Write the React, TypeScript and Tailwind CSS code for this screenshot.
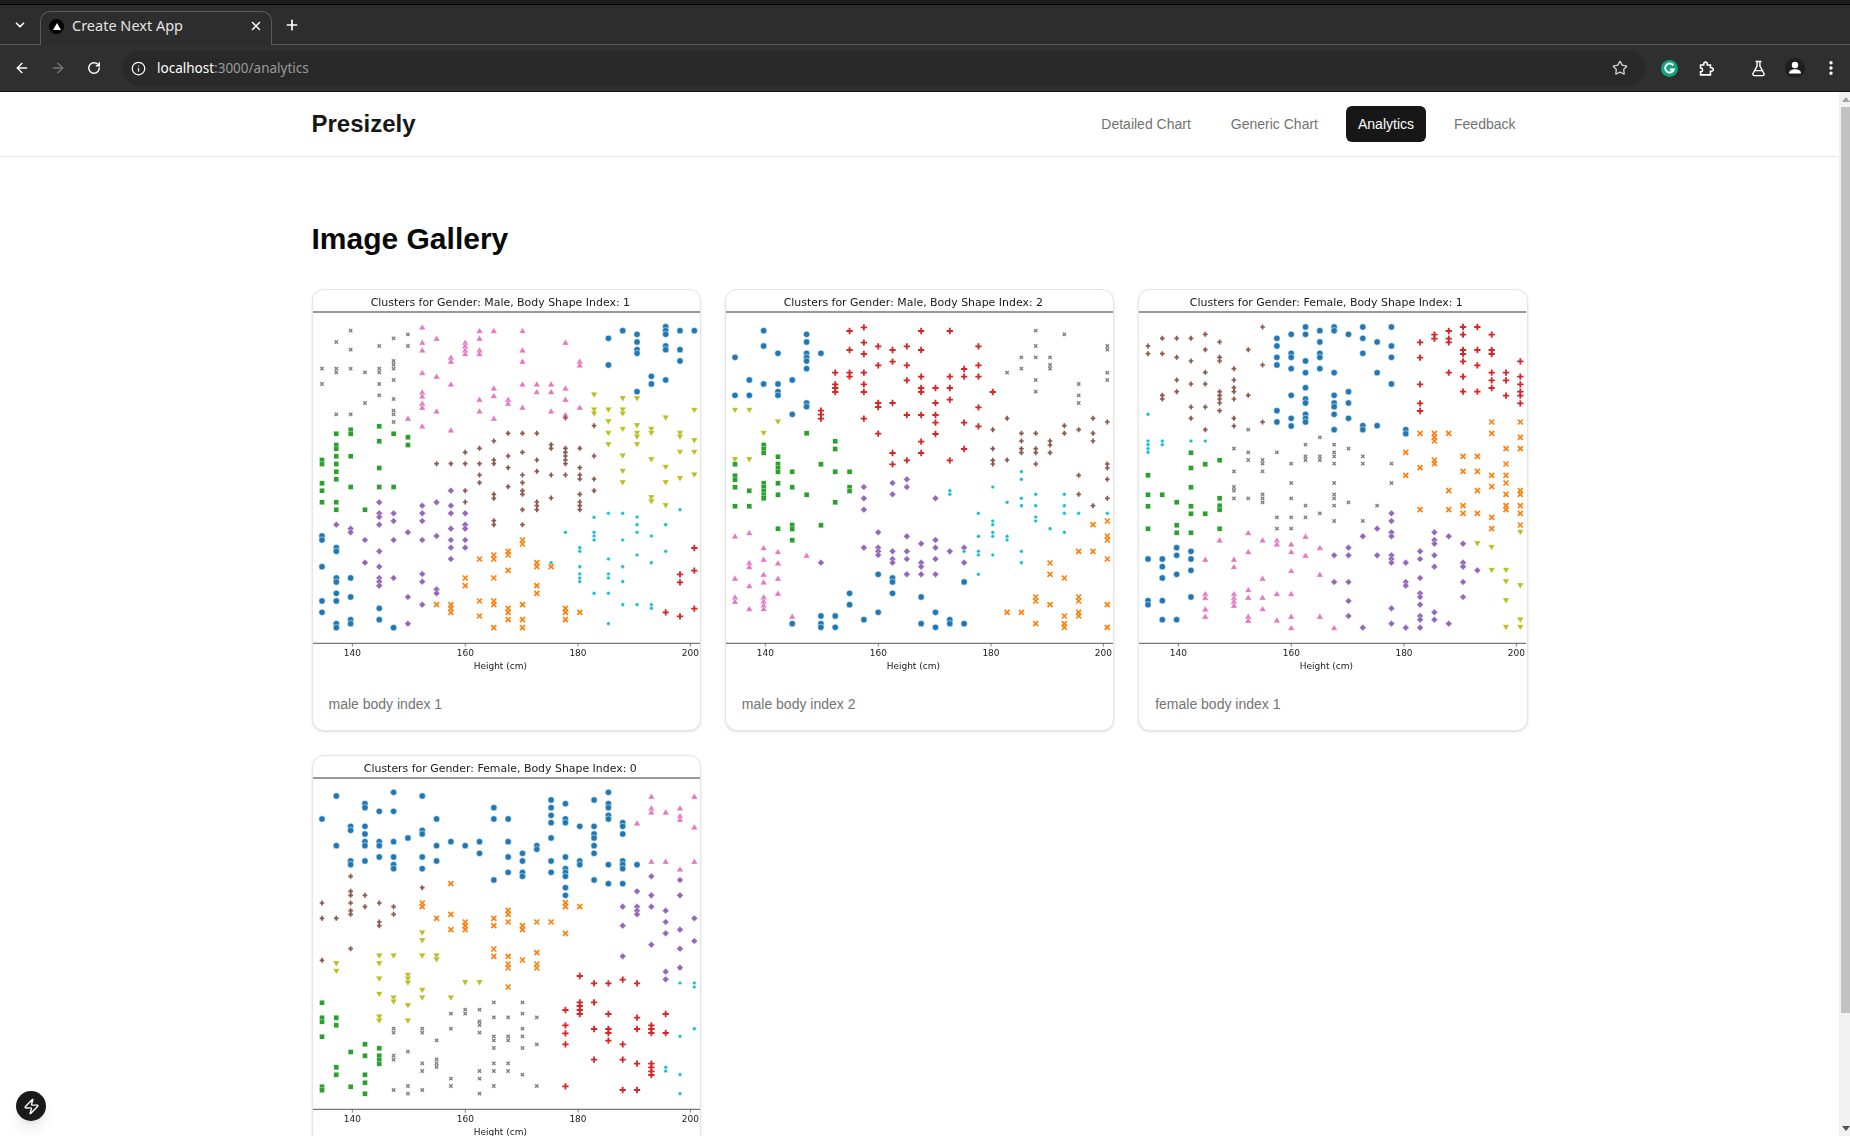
import { ArrowLeft, ArrowRight, ChevronDown, EllipsisVertical, FlaskConical, Info, Plus, RotateCw, Star, X, Zap } from "lucide-react"

type Marker = "circle" | "x" | "square" | "plus" | "diamond" | "thin" | "up" | "smallx" | "down" | "dot"

const markers: Record<string, { marker: Marker; color: string }> = {
  blue: { marker: "circle", color: "#1f77b4" },
  orange: { marker: "x", color: "#ff7f0e" },
  green: { marker: "square", color: "#2ca02c" },
  red: { marker: "plus", color: "#d62728" },
  purple: { marker: "diamond", color: "#9467bd" },
  brown: { marker: "thin", color: "#8c564b" },
  pink: { marker: "up", color: "#e377c2" },
  gray: { marker: "smallx", color: "#7f7f7f" },
  olive: { marker: "down", color: "#bcbd22" },
  cyan: { marker: "dot", color: "#17becf" },
}

// "col:y,y col:y" - col is the height step, y is measured in 3x pixels of the picture
const charts = [
  {
    title: "Clusters for Gender: Male, Body Shape Index: 1",
    caption: "male body index 1",
    top: 28,
    series: {
      gray: "0:264,310 1:184,264,275,401 2:150,207,264,401 3:275,367 4:196,264,275,310,344 5:173,241,252,264,298,355,390,401,424 6:161,196",
      pink: "6:414 7:140,186,209,277,335,347,369,381,437 8:174,288,392 9:231,243,311,449 10:186,197,209,220 11:151,174,209,220,357,392 12:151,323,346,414 13:357,369 14:151,209,243,311,381 15:311,334 16:311,334,392 17:186,323,357,403 18:243,254,381",
      olive: "19:342,387,399 20:387,422,457,491 21:353,387,399,445,525,571,605 22:353,434,457,468,491 23:445,457,536,650,662 24:411,559,605,674 25:457,468,514,593 26:388,479,514,582",
      brown: "8:549 9:549 10:515,549,630,664 11:503,549,583,606 12:481,538,549,641,653,720,732 13:458,526,561,618 14:458,515,583,606,630,641,687,732 15:458,538,572,664,675,687 16:492,503,583,652 17:412,503,515,526,538,549,583 18:503,561,583,595,641,664,675,687 19:435,526,595,630",
      green: "0:538,550,608,630,665 1:459,493,504,527,550,573,596,665,687 2:447,459,527,619 3:687 4:437,482,562,619 5:459,619 6:470,493",
      purple: "1:732 2:744,755 3:778,846 4:665,698,709,732,812,858,892,903,915 5:698,721,778,892 6:755,949,1029 7:675,698,721,778,880,903,972 8:665,766,926,938 9:630,675,698,744,778,801,835 10:698,732,744,778,801",
      cyan: "16:846 17:755 18:801,812,858,880,892,903 19:710,755,766,778,938 20:698,835,880,892,938,1029 21:698,778,858,903,972 22:709,732,755,823,972 23:766,846,972,983 24:732,812 25:687",
      blue: "0:766,778,858,961,995 1:801,812,892,904,938,961,1029,1041 2:892,949,1017,1029 4:983,1017 5:1041 20:173,253 21:150 22:161,184,207,218,333 23:287,310 24:138,150,161,196,207,298 25:150,207,241 26:150",
      orange: "8:972 9:972,983,995 10:892,915 11:835,961,1006 12:823,835,892,961,972,1041 13:812,823,869,983,995,1017 14:778,790,972,1017,1041 15:846,858,915,938 16:858 17:983,995,1017 18:995",
      red: "24:995 25:881,905,1007 26:802,870,984",
    },
  },
  {
    title: "Clusters for Gender: Male, Body Shape Index: 2",
    caption: "male body index 2",
    top: 28,
    series: {
      blue: "0:230,344 1:298,344 2:150,196,310 3:218,310,333,344 4:298,401,1029 5:161,184,218,230,241,264,367,378 6:218,1006,1029,1040 7:1006,1040 8:938,972 9:1017 10:881,995 11:892,904,938 13:949,1029 14:995,1040 15:1017,1029 16:904,1029",
      olive: "0:388,536 1:388,536 2:457 3:423",
      red: "6:390,402,414 7:276,311,322,334 8:151,208,276,288 9:140,186,220,276,311,334,414 10:197,254,367,379,459 11:208,243,367,517,551 12:197,254,299,403,539 13:151,208,288,322,334,403,483,517 14:322,367,403,426,460 15:151,288,322,357,539 16:265,288,426,505 17:197,254,288,380,437 18:334",
      green: "0:551,585,597,620,677 1:630,677 2:493,505,516,608,620,631,642,653 3:528,550,562,573,608,642,744 4:573,620,733,745,779 5:458,642 6:551,734 7:482,505,573,665 8:573,620,631",
      gray: "19:276 20:230,264 21:150,196,230,298,333 22:230,253,264 23:161 24:310,344,367 26:196,207,276,298",
      brown: "18:447,504,539,550 19:413,538 20:458,481,504,516 21:458,504,516,550 22:481,493,516 23:435,458 24:447,584,641 25:413,458,481,675 26:424,550,562,596,653",
      purple: "6:846 9:619,653,687,801 10:755,801,812,823 11:607,641,812,835,846 12:596,619,767,812,835,881 13:789,846,858,881 14:653,778,801,835,881 15:812 16:801,846",
      cyan: "15:630,641 16:812 17:698,767,812,823,881 18:619,721,732,755,767,823 19:665,767,778 20:573,596,653,675,812,846 21:641,675,709,721 22:744 23:641,675,698,755 24:698 26:698",
      pink: "0:767,894,950,963 1:757,847,859,916,985 2:802,837,882,905,950,962,974,985 3:814,848,894,939 4:1008 5:825",
      orange: "19:995 20:995 21:949,961,1029 22:847,881,972 23:892,1006,1029,1040 24:812,949,961,995,1006 25:732,812 26:721,766,778,835,972,1040",
    },
  },
  {
    title: "Clusters for Gender: Female, Body Shape Index: 1",
    caption: "female body index 1",
    top: 28,
    series: {
      brown: "0:196,219 1:173,219,344,355 2:173,230,298,333 3:173,241,310,379,413 4:161,207,275,310,379,447 5:184,230,241,333,344,355,367,390 6:264,298,321,333,355,413,436 7:207,344 8:139,253,424",
      blue: "0:835,960,972 1:835,858,892,960,1017 2:801,824,881,1017 3:812,835,869,949 9:173,196,230,253,390,424 10:161,218,230,264,344,413,436 11:139,161,241,276,321,355,367,401,413,424 12:150,184,218,230,264 13:139,150,276,344,367,378,401,447 14:161,333,367,413 15:139,173,218,435,447 16:184,276,435 17:139,196,230,310 18:447,459",
      red: "19:185,231,311,368,391 20:162,174 21:151,174,185,276 22:139,162,208,220,242,288,333 23:139,208,254,333 24:162,208,220,276,299,322 25:276,299,345 26:242,288,311,333,345,368",
      cyan: "0:401,481,492,504,515 1:481,492 3:481 4:481",
      green: "0:584,642,677,744 1:642 2:665,734,756 3:516,562,620,677,699,756 4:551,699 5:539,653,675,687,744",
      gray: "6:504,572,619,630,653 7:447,515,538,653 8:538,549,572,641,653,665 9:515,710,744 10:549,607,653,710,744 11:492,527,538,675,710 12:470,527,538,698 13:492,515,527,549,607,641,653,675,721 14:504,665 15:527,549,721 16:675 17:549,607",
      orange: "18:515,584 19:458,561,687 20:458,470,481,538,549 21:458,630,687 22:527,572,675,698 23:527,572,630,698 24:424,458,584,618,710,744 25:504,550,584,607,641,675,687 26:424,470,504,630,641,675,698,733",
      pink: "4:837,940,952,986,1008 5:779 6:837,859,940,952,963,975 7:757,814,928,951,1008,1020 8:779,894,951,985 9:779,791,940,1019 10:791,814,871,940,1008,1042 11:768,825 12:802,882,1008 13:1042",
      purple: "13:824,904 14:801,824,904,961,1006 15:767,1041 16:744,824 17:698,721,755,767,824,835,846,983,1029 18:846,904,915,1041 19:812,835,892,938,949,972,1006,1017,1041 20:755,778,789,824,858,995,1017 21:767,1029 22:789,846,858,904,949 23:869",
      olive: "23:788 24:799,868 25:868,902,959,1039 26:754,914,1017,1039",
    },
  },
  {
    title: "Clusters for Gender: Female, Body Shape Index: 0",
    caption: "",
    top: 27,
    series: {
      blue: "0:216 1:147,296 2:238,250,342,353 3:170,182,238,261,284,296,342 4:193,284,296,330 5:136,193,284,330,353,365 6:273 7:147,250,261,330,365 8:216,296,342 9:284 10:296 11:284,319 12:182,216,399 13:216,284,330,376 14:319,342,376,388 15:296,307 16:159,182,205,227,273,342,376 17:170,216,227,330,365,376,388,422,445 18:238,342,353 19:159,238,261,273,296,319,399 20:136,170,182,205,216,353,410 21:227,238,261,342,353,365,410 22:353",
      pink: "22:229 23:149,184,196,344 24:196,344 25:184,207,218,367 26:149,241,344",
      brown: "0:468,514,640 1:514 2:388,433,445,468,491,502,605 3:445,479 4:468,525,536 5:479,502 7:422",
      orange: "7:468,479 8:514 9:410,502,548 10:525,536,548 12:514,536,606,628 13:490,502,525,628,651,663,720 14:536,548,639 15:525,617,651,663 16:525 17:467,479,559 18:479",
      purple: "21:479,536,628 22:433,479,491,502 23:388,445,479,593 24:491,525,559,674,697 25:399,445,548,605,662 26:514,582",
      olive: "1:649,672 4:626,649,695,741,809,821 5:626,752,764 6:684,695,707,775,821 7:557,580,626,729,752 8:626,637 9:752 10:706 11:706",
      green: "0:767,812,824,869,1019,1030 1:812,835,961,983 2:915,1019 3:892,926,983,1007,1040 4:904,926,938,950",
      gray: "5:845,857,926,938,1029 6:914,1017,1040 7:845,857,949,972,1029 8:880,937,949,960 9:800,845,995,1017 10:788,800 11:788,823,834,857,972,995,1040 12:766,811,868,880,903,949,972,1017 13:811,868,880,949,972 14:766,800,845,868,903,983 15:811,892,1017",
      red: "17:789,835,859,892,1018 18:687,766,777,789,801 19:709,766,846,938 20:709,801,846,858,881 21:698,892,938,1029 22:709,812,846,950,1029 23:835,846,858,950,961,973,984 24:801,858",
      cyan: "24:961,972 25:708,868,983,1040 26:708,720,845",
    },
  },
]

const ticks = [
  { label: "140", x: 118 },
  { label: "160", x: 457 },
  { label: "180", x: 795 },
  { label: "200", x: 1132 },
]

function Point({ marker, color, x, y }: { marker: Marker; color: string; x: number; y: number }) {
  const t = `translate(${x} ${y})`
  if (marker === "circle") return <circle cx={x} cy={y} r={9.5} fill={color} stroke="#fff" strokeWidth={1.5} />
  if (marker === "dot") return <circle cx={x} cy={y} r={5.5} fill={color} stroke="#fff" strokeWidth={1} />
  if (marker === "square") return <rect x={x - 7.5} y={y - 7.5} width={15} height={15} fill={color} stroke="#fff" strokeWidth={1} />
  if (marker === "diamond") return <polygon transform={t} points="0,-10 10,0 0,10 -10,0" fill={color} stroke="#fff" strokeWidth={1} />
  if (marker === "up") return <polygon transform={t} points="0,-10 10,7 -10,7" fill={color} stroke="#fff" strokeWidth={1} />
  if (marker === "down") return <polygon transform={t} points="0,10 10,-7 -10,-7" fill={color} stroke="#fff" strokeWidth={1} />
  if (marker === "plus") return <path transform={t} d="M-9.5 0H9.5M0 -9.5V9.5" stroke={color} strokeWidth={5.5} fill="none" />
  if (marker === "thin") return <path transform={t} d="M-7 0H7M0 -7.5V7.5" stroke={color} strokeWidth={5} fill="none" />
  if (marker === "x") return <path transform={t} d="M-7.5 -7.5L7.5 7.5M7.5 -7.5L-7.5 7.5" stroke={color} strokeWidth={5} fill="none" />
  return <path transform={t} d="M-5 -5L5 5M5 -5L-5 5" stroke={color} strokeWidth={4} fill="none" />
}

function ClusterChart({ title, top, series }: { title: string; top: number; series: Record<string, string> }) {
  return (
    <svg viewBox="0 0 1162 1162" className="block aspect-square w-full blur-[0.3px]">
      <text x={562} y={49} textAnchor="middle" fontSize={32.8} fontFamily="'DejaVu Sans', sans-serif" fill="#1a1a1a">
        {title}
      </text>
      <line x1={0} x2={1162} y1={66} y2={66} stroke="#777" strokeWidth={4} />
      {Object.entries(series).map(([name, data]) =>
        data.split(" ").flatMap((group) => {
          const [col, ys] = group.split(":")
          return ys
            .split(",")
            .map((y) => (
              <Point
                key={`${name}-${col}-${y}`}
                marker={markers[name].marker}
                color={markers[name].color}
                x={27 + 42.96 * Number(col)}
                y={Number(y) - top}
              />
            ))
        }),
      )}
      <line x1={0} x2={1162} y1={1060} y2={1060} stroke="#777" strokeWidth={4} />
      {ticks.map((tick) => (
        <g key={tick.label}>
          <line x1={tick.x} x2={tick.x} y1={1060} y2={1070} stroke="#444" strokeWidth={2} />
          <text x={tick.x} y={1097} textAnchor="middle" fontSize={27} fontFamily="'DejaVu Sans', sans-serif" fill="#1a1a1a">
            {tick.label}
          </text>
        </g>
      ))}
      <text x={562} y={1138} textAnchor="middle" fontSize={27} fontFamily="'DejaVu Sans', sans-serif" fill="#1a1a1a">
        Height (cm)
      </text>
    </svg>
  )
}

function BrowserChrome() {
  return (
    <div className="shrink-0 font-['Noto_Sans',sans-serif]">
      <div className="h-[4px] bg-[#1c1c1c]" />
      <div className="h-px bg-black" />
      <div className="flex h-[40px] items-end border-b border-[#5a5a5a] bg-[#2d2d2d] pl-[40px]">
        <ChevronDown className="absolute left-[13px] top-[18px] h-[14px] w-[14px] text-white" strokeWidth={3} />
        <div className="-mb-px flex h-[34px] w-[232px] items-center rounded-t-[10px] border border-b-0 border-[#5a5a5a] bg-[#2d2d2d] pb-[5px] pl-[8px] pr-[8px]">
          <span className="flex h-[15px] w-[15px] items-center justify-center rounded-full bg-black">
            <span className="h-0 w-0 border-x-[4px] border-b-[7px] border-x-transparent border-b-white" />
          </span>
          <span className="ml-[8px] flex-1 text-[14.5px] text-[#e4e4e4]">Create Next App</span>
          <X className="h-[14px] w-[14px] text-white" strokeWidth={2.5} />
        </div>
        <Plus className="mb-[11px] ml-[12px] h-[16px] w-[16px] text-white" strokeWidth={2.5} />
      </div>
      <div className="flex h-[47px] items-center border-b border-[#111] bg-[#2f2f2f]">
        <ArrowLeft className="ml-[14px] h-[16px] w-[16px] text-white" strokeWidth={2} />
        <ArrowRight className="ml-[20px] h-[16px] w-[16px] text-[#777]" strokeWidth={2} />
        <RotateCw className="ml-[21px] h-[14px] w-[14px] text-white" strokeWidth={2.5} />
        <div className="ml-[21px] flex h-[35px] w-[1524px] items-center rounded-full bg-[#292929] pl-[9px]">
          <Info className="h-[15px] w-[15px] text-white" strokeWidth={2} />
          <span className="ml-[11px] flex-1 text-[13.5px] text-white">
            localhost<span className="text-[#9a9a9a]">:3000/analytics</span>
          </span>
          <Star className="mr-[18px] h-[16px] w-[16px] text-[#cfcfcf]" strokeWidth={2} />
        </div>
        <svg viewBox="0 0 16 16" className="ml-[15px] h-[17px] w-[17px]">
          <circle cx="8" cy="8" r="8" fill="#15a37f" />
          <path d="M11.5 5a4.2 4.2 0 1 0 .6 4H8.4" fill="none" stroke="#fff" strokeWidth="1.8" />
        </svg>
        <svg viewBox="0 0 24 24" className="ml-[19px] h-[17px] w-[17px]" fill="none" stroke="#fff" strokeWidth="2.2">
          <path d="M5 7h4.5V5.5a2.5 2.5 0 0 1 5 0V7H19v4h1.5a2.5 2.5 0 0 1 0 5H19v5H5v-4.2a2.8 2.8 0 0 0 0-5.6z" />
        </svg>
        <FlaskConical className="ml-[36px] h-[17px] w-[17px] text-white" strokeWidth={2} />
        <svg viewBox="0 0 20 20" className="ml-[18px] h-[20px] w-[20px]">
          <circle cx="10" cy="10" r="10" fill="#1e1e1e" />
          <circle cx="10" cy="7" r="3.2" fill="#fff" />
          <path d="M4 15.5c0-3 3-4.3 6-4.3s6 1.3 6 4.3z" fill="#fff" />
        </svg>
        <EllipsisVertical className="ml-[17px] h-[18px] w-[18px] text-white" strokeWidth={2.5} />
      </div>
    </div>
  )
}

function Scrollbar() {
  return (
    <div className="flex w-[11px] shrink-0 flex-col items-end bg-[#f1f1f1]">
      <div className="flex h-[15px] w-[9px] items-center justify-center">
        <span className="h-0 w-0 border-x-[4px] border-b-[5px] border-x-transparent border-b-[#a3a3a3]" />
      </div>
      <div className="h-[906px] w-[9px] bg-[#c1c1c1]" />
      <div className="flex-1" />
      <div className="flex h-[15px] w-[9px] items-center justify-center">
        <span className="h-0 w-0 border-x-[4px] border-t-[5px] border-x-transparent border-t-[#505050]" />
      </div>
    </div>
  )
}

const navItems = ["Detailed Chart", "Generic Chart", "Analytics", "Feedback"]

export default function App() {
  return (
    <div className="relative flex h-screen flex-col overflow-hidden bg-white font-['Liberation_Sans',Arial,sans-serif]">
      <BrowserChrome />
      <div className="flex min-h-0 flex-1">
        <div className="min-w-0 flex-1 overflow-hidden">
          <header className="border-b border-[#e5e5e5]">
            <div className="mx-auto flex h-16 w-[1216px] items-center justify-between">
              <h1 className="text-2xl font-bold text-[#171717]">Presizely</h1>
              <nav className="flex gap-4">
                {navItems.map((item) => (
                  <a
                    key={item}
                    className={
                      item === "Analytics"
                        ? "rounded-md bg-[#171717] px-3 py-2 text-sm text-white"
                        : "rounded-md px-3 py-2 text-sm text-[#737373]"
                    }
                  >
                    {item}
                  </a>
                ))}
              </nav>
            </div>
          </header>
          <main className="mx-auto w-[1216px] py-16">
            <h2 className="mb-8 text-3xl font-bold text-[#0a0a0a]">Image Gallery</h2>
            <div className="grid grid-cols-3 gap-6">
              {charts.map((chart) => (
                <div key={chart.title} className="overflow-hidden rounded-xl border border-[#e5e5e5] bg-white shadow-sm">
                  <ClusterChart title={chart.title} top={chart.top} series={chart.series} />
                  {chart.caption && <p className="px-4 pb-4 pt-[17px] text-sm text-[#737373]">{chart.caption}</p>}
                </div>
              ))}
            </div>
          </main>
        </div>
        <Scrollbar />
      </div>
      <div className="absolute bottom-[15px] left-[16px] flex h-[30px] w-[30px] items-center justify-center rounded-full bg-[#1a1a1a] shadow-lg">
        <Zap className="h-[17px] w-[17px] text-white" strokeWidth={2} />
      </div>
    </div>
  )
}
